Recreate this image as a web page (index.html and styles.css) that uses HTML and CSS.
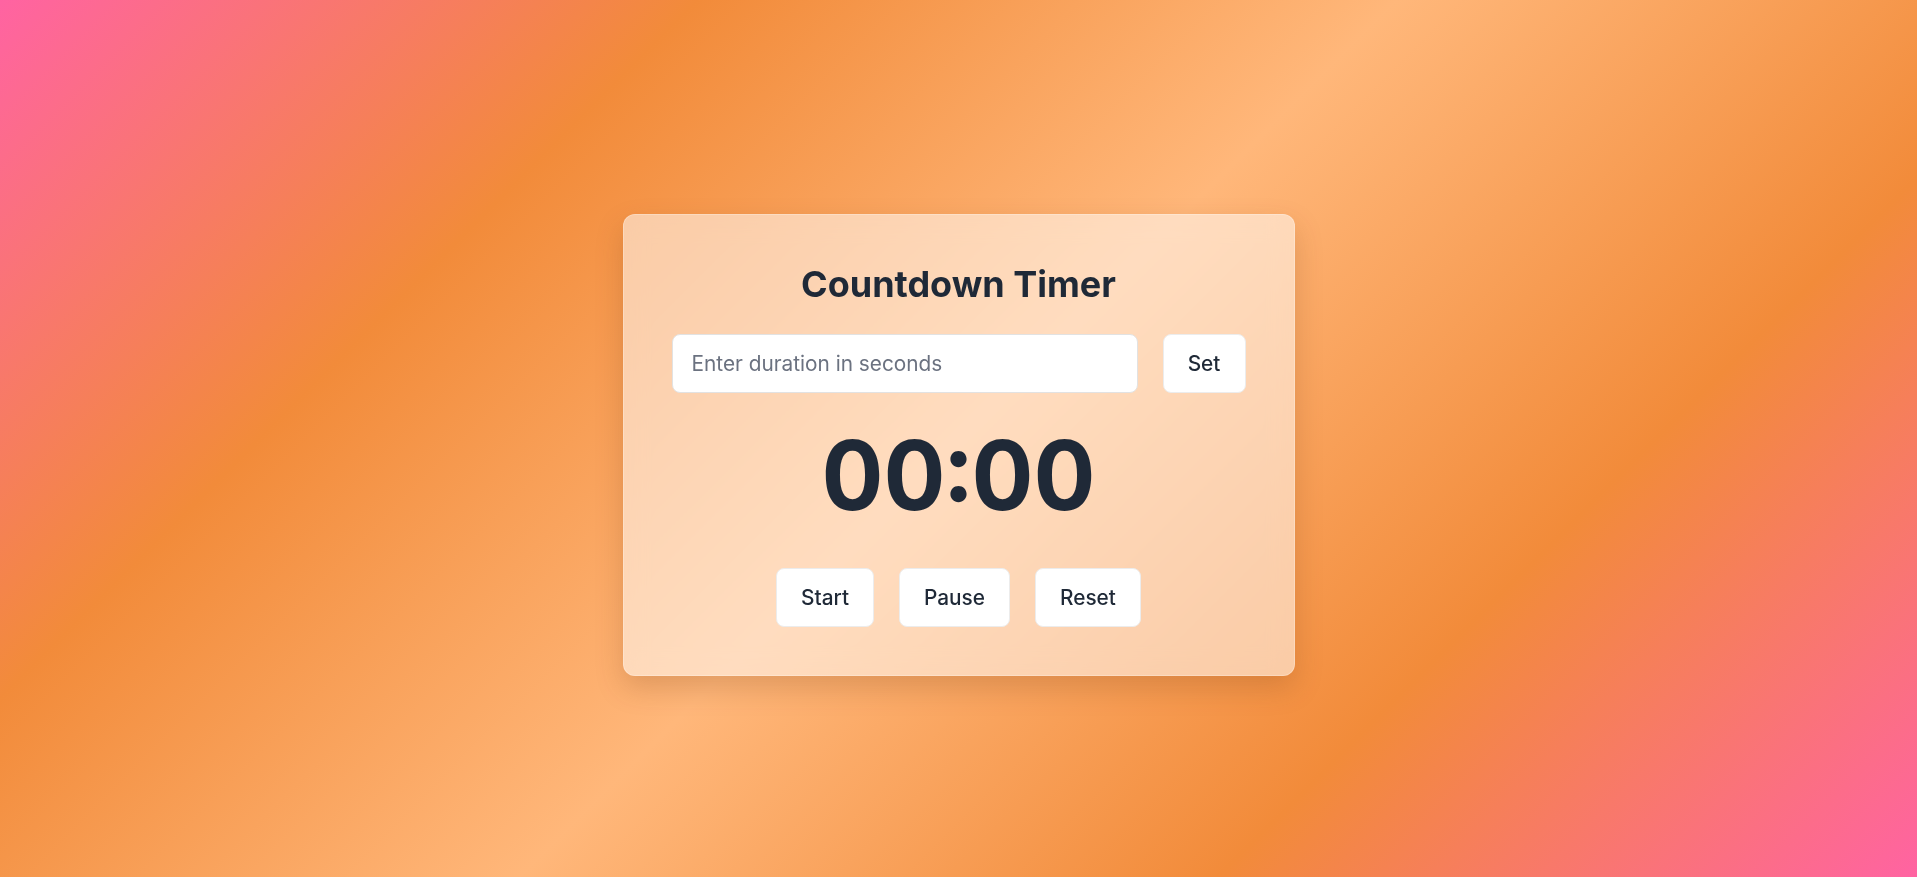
FILE: index.html
```html
<!DOCTYPE html>
<html lang="en">
<head>
<meta charset="utf-8">
<title>Countdown Timer</title>
<link rel="stylesheet" href="styles.css">
</head>
<body>
<main class="page">
  <section class="card">
    <h1 class="title">Countdown Timer</h1>
    <div class="input-row">
      <input class="duration" type="number" placeholder="Enter duration in seconds">
      <button class="btn btn-set">Set</button>
    </div>
    <div class="display">00:00</div>
    <div class="controls">
      <button class="btn">Start</button>
      <button class="btn">Pause</button>
      <button class="btn">Reset</button>
    </div>
  </section>
</main>
</body>
</html>
```
FILE: styles.css
```css
* { box-sizing: border-box; }
html, body { margin: 0; height: 100%; }
body {
  font-family: Inter, "Noto Sans", "Liberation Sans", sans-serif;
  background: linear-gradient(135deg, #ff63a2 0%, #f28b3a 25%, #ffb77a 50%, #f28b3a 75%, #ff63a2 100%);
  color: #1f2937;
}
.page {
  min-height: 100vh;
  display: flex;
  align-items: center;
  justify-content: center;
}
.card {
  width: 672px;
  padding: 48px;
  border-radius: 12px;
  background: rgba(255, 255, 255, 0.52);
  border: 1px solid rgba(255, 255, 255, 0.25);
  backdrop-filter: blur(12px);
  box-shadow: 0 12px 28px rgba(120, 60, 20, 0.22);
  display: flex;
  flex-direction: column;
  align-items: stretch;
  margin-top: 13px;
}
.title {
  margin: 0 0 27px;
  text-align: center;
  font-size: 36px;
  font-weight: 700;
  line-height: 1.21;
  color: #1f2937;
}
.input-row {
  display: flex;
  gap: 25px;
}
.duration {
  flex: 1;
  height: 59px;
  padding: 0 19px;
  font-family: inherit;
  font-size: 20.8px;
  color: #1f2937;
  background: #fff;
  border: 1px solid #e2e2e2;
  border-radius: 8px;
  outline: none;
}
.duration::placeholder { color: #6b7280; }
.btn {
  height: 59px;
  padding: 0 24px;
  font-family: inherit;
  font-size: 20.8px;
  font-weight: 500;
  color: #1f2937;
  background: #fff;
  border: 1px solid #ececec;
  border-radius: 8px;
  cursor: pointer;
}
.btn-set { width: 83px; padding: 0; }
.display {
  margin: 34px 0 45px;
  text-align: center;
  font-size: 96px;
  font-weight: 700;
  line-height: 96px;
  color: #1f2937;
  font-variant-numeric: tabular-nums;
}
.controls {
  display: flex;
  justify-content: center;
  gap: 25px;
}
```
